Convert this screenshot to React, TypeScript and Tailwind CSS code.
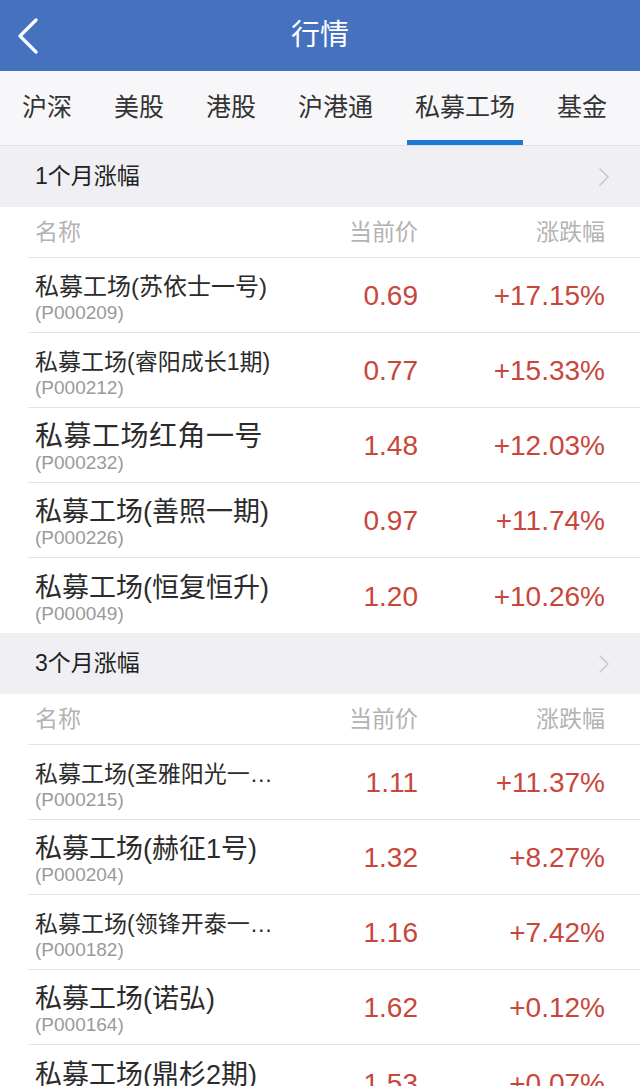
import React from 'react';

const font = "font-['Liberation_Sans','Noto_Sans_CJK_SC',sans-serif]";

type Row = { name: string; size: string; code: string; price: string; change: string };

const oneMonth: Row[] = [
  { name: '私募工场(苏依士一号)', size: 'text-[24px]', code: '(P000209)', price: '0.69', change: '+17.15%' },
  { name: '私募工场(睿阳成长1期)', size: 'text-[23px]', code: '(P000212)', price: '0.77', change: '+15.33%' },
  { name: '私募工场红角一号', size: 'text-[28px] tracking-[0.5px]', code: '(P000232)', price: '1.48', change: '+12.03%' },
  { name: '私募工场(善照一期)', size: 'text-[27px]', code: '(P000226)', price: '0.97', change: '+11.74%' },
  { name: '私募工场(恒复恒升)', size: 'text-[27px]', code: '(P000049)', price: '1.20', change: '+10.26%' },
];

const threeMonth: Row[] = [
  { name: '私募工场(圣雅阳光一…', size: 'text-[23px]', code: '(P000215)', price: '1.11', change: '+11.37%' },
  { name: '私募工场(赫征1号)', size: 'text-[27px]', code: '(P000204)', price: '1.32', change: '+8.27%' },
  { name: '私募工场(领锋开泰一…', size: 'text-[23px]', code: '(P000182)', price: '1.16', change: '+7.42%' },
  { name: '私募工场(诺弘)', size: 'text-[27px]', code: '(P000164)', price: '1.62', change: '+0.12%' },
  { name: '私募工场(鼎杉2期)', size: 'text-[27px]', code: '(P000199)', price: '1.53', change: '+0.07%' },
];

const tabs = ['沪深', '美股', '港股', '沪港通', '私募工场', '基金'];

const Section: React.FC<{ title: string; rows: Row[] }> = ({ title, rows }) => (
  <div>
    <div className="h-[61px] bg-[#f0f0f4] flex items-center justify-between pl-[35px] pr-[30px]">
      <span className="text-[23px] text-[#222]">{title}</span>
      <svg width="12" height="20" viewBox="0 0 12 20" fill="none" stroke="#c9c9ce" strokeWidth="1.6">
        <polyline points="1.5,1.5 10,10 1.5,18.5" />
      </svg>
    </div>
    <div className="bg-white">
      <div className="ml-[28px] h-[51px] border-b border-[#e4e4e8] grid grid-cols-[255px_128px_187px] pl-[7px] items-center text-[23px] text-[#b3b3b3]">
        <span>名称</span>
        <span className="text-right">当前价</span>
        <span className="text-right">涨跌幅</span>
      </div>
      {rows.map((r, i) => (
        <div
          key={r.code}
          className={`h-[75px] grid grid-cols-[255px_128px_187px] items-center ${
            i === rows.length - 1 ? 'pl-[35px]' : 'ml-[28px] pl-[7px] border-b border-[#e4e4e8]'
          }`}
        >
          <div className="flex flex-col pt-[6px]">
            <div className={`${r.size} leading-[30px] text-[#2b2b2b] whitespace-nowrap`}>{r.name}</div>
            <div className="text-[19px] leading-[22px] text-[#9a9a9a]">{r.code}</div>
          </div>
          <span className="text-right text-[28px] text-[#c9463b] pt-[2px]">{r.price}</span>
          <span className="text-right text-[28px] text-[#c9463b] pt-[2px]">{r.change}</span>
        </div>
      ))}
    </div>
  </div>
);

export default function App() {
  return (
    <div className={`w-[640px] h-[1086px] overflow-hidden bg-white ${font}`}>
      <div className="h-[71px] bg-[#4571bf] flex items-center">
        <div className="pl-[17px] flex items-center">
          <svg width="22" height="36" viewBox="0 0 22 36" fill="none" stroke="#ffffff" strokeWidth="3.2" strokeLinecap="round" strokeLinejoin="round">
            <polyline points="19,2 3,18 19,34" />
          </svg>
        </div>
        <div className="flex-1 text-center text-white text-[29px] -ml-[39px]">行情</div>
      </div>
      <div className="h-[75px] bg-[#f7f7f9] border-b border-[#e2e2e6] flex pl-[14px] gap-[26px]">
        {tabs.map((t) => (
          <div
            key={t}
            className={`h-full flex items-center px-[8px] text-[25px] text-[#333] ${t === '私募工场' ? 'border-b-[5px] border-[#1a7ad4] pt-[5px]' : ''}`}
          >
            {t}
          </div>
        ))}
      </div>
      <Section title="1个月涨幅" rows={oneMonth} />
      <Section title="3个月涨幅" rows={threeMonth} />
    </div>
  );
}
